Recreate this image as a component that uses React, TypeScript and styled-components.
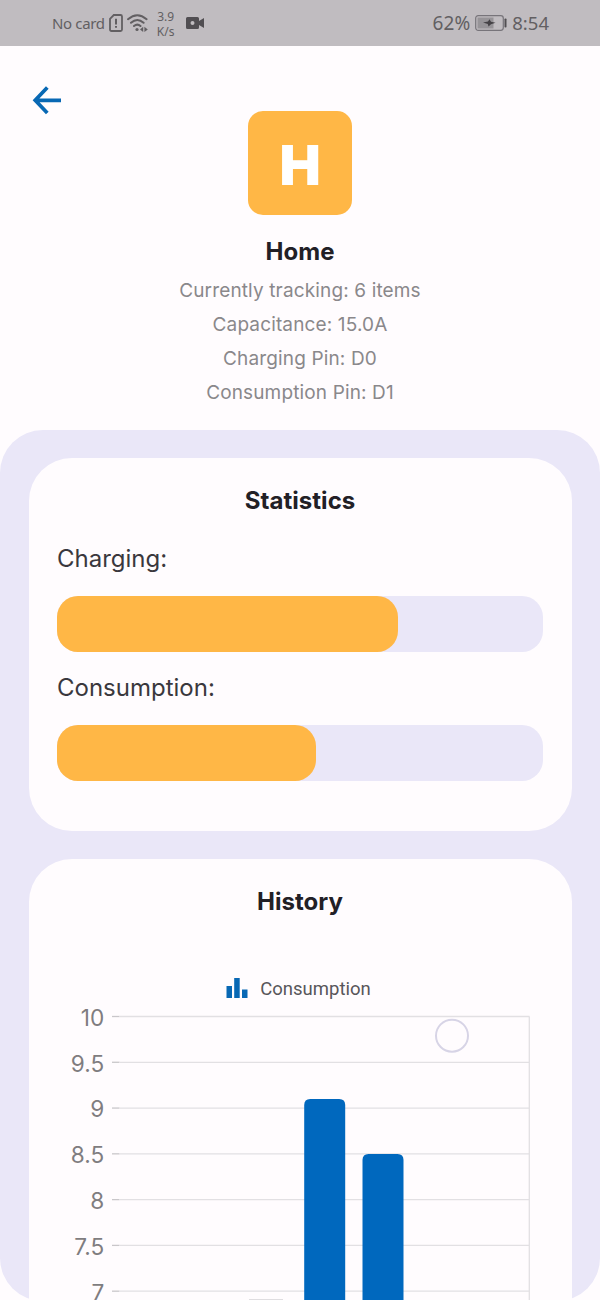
import React from "react";
import styled, { createGlobalStyle } from "styled-components";

const GlobalStyle = createGlobalStyle`
  * { box-sizing: border-box; }
  body { margin: 0; background: #fffcfe; font-family: Inter, "Liberation Sans", sans-serif; }
`;

const Screen = styled.div`
  width: 600px;
  height: 1300px;
  overflow: hidden;
  background: #fffcfe;
  display: flex;
  flex-direction: column;
`;

const StatusBar = styled.header`
  flex: none;
  height: 46px;
  padding: 0 51px 0 52px;
  background: #c0bcc0;
  color: #625f62;
  display: flex;
  justify-content: space-between;
  align-items: center;
  font-family: "Noto Sans", sans-serif;
`;

const StatusGroup = styled.div<{ $gap: number }>`
  display: flex;
  align-items: center;
  gap: ${(p) => p.$gap}px;
  height: 46px;
`;

const StatusText = styled.span<{ $size: number; $spacing?: number }>`
  font-size: ${(p) => p.$size}px;
  letter-spacing: ${(p) => p.$spacing ?? 0}px;
  line-height: 24px;
  white-space: nowrap;
`;

const Speed = styled.div`
  width: 22px;
  margin: 1px 5px 0 3px;
  text-align: center;
  font-size: 12px;
  line-height: 15px;
  white-space: nowrap;
`;

const SpeedLine = styled.div`
  height: 15px;
`;

const Profile = styled.section`
  flex: none;
  height: 384px;
  padding: 38px 31px 0;
  display: flex;
  flex-direction: column;
  align-items: center;
`;

const BackButton = styled.button`
  align-self: flex-start;
  width: 32px;
  height: 32px;
  margin-bottom: -5.5px;
  padding: 0;
  border: 0;
  background: none;
`;

const Avatar = styled.div`
  width: 104px;
  height: 104px;
  border-radius: 15px;
  background: #ffb746;
  color: #fff;
  font-size: 55px;
  font-weight: 900;
  line-height: 108px;
  text-align: center;
`;

const Title = styled.h2<{ $top: number }>`
  margin: ${(p) => p.$top}px 0 0;
  color: #222026;
  font-size: 24px;
  font-weight: 700;
  letter-spacing: 0.05px;
  line-height: 30px;
  text-align: center;
`;

const Info = styled.p`
  margin: 0;
  color: #8a888b;
  font-size: 19px;
  letter-spacing: 0.14px;
  line-height: 34px;
`;

const InfoList = styled.div`
  margin-top: 7px;
  text-align: center;
`;

const Panel = styled.main`
  flex: none;
  height: 871px;
  padding: 28px 28.5px 0;
  border-radius: 43px;
  background: #eae7f8;
  display: flex;
  flex-direction: column;
  gap: 28px;
`;

const Card = styled.section<{ $height: number }>`
  flex: none;
  height: ${(p) => p.$height}px;
  padding: 28px 28.5px 0;
  border-radius: 43px;
  background: #fffcfe;
`;

const Label = styled.div<{ $top: number }>`
  margin-top: ${(p) => p.$top}px;
  color: #3a383d;
  font-size: 24px;
  line-height: 30px;
`;

const Track = styled.div`
  height: 56px;
  margin-top: 22px;
  border-radius: 21px;
  background: #eae7f8;
`;

const Fill = styled.div`
  height: 56px;
  border-radius: 21px;
  background: #ffb746;
`;

const Legend = styled.div`
  height: 28px;
  margin-top: 57px;
  padding-right: 3px;
  display: flex;
  justify-content: center;
  align-items: center;
  gap: 12px;
  color: #58565a;
  font-family: Roboto, sans-serif;
  font-size: 18.5px;
`;

const LegendText = styled.span`
  padding-top: 1px;
`;

const ChartSvg = styled.svg`
  display: block;
  overflow: visible;
`;

const AxisLabel = styled.text`
  fill: #7f7d80;
  font-size: 22.6px;
  text-anchor: end;
`;

const ticks = ["10", "9.5", "9", "8.5", "8", "7.5", "7"];
const stepY = 45.78;
const firstY = 14.5;

const bars = [
  { x: 247.2, y: 97 },
  { x: 305.5, y: 152 },
];

function HistoryChart() {
  return (
    <ChartSvg width="486" height="320" viewBox="0 0 486 320">
      {ticks.map((t, i) => {
        const y = firstY + i * stepY;
        return (
          <g key={t}>
            <AxisLabel x="47.2" y={y + 9.4}>{t}</AxisLabel>
            <line x1="55" x2="62.5" y1={y} y2={y} stroke="#c9c7ca" strokeWidth="1.3" />
            <line x1="62.5" x2="472.5" y1={y} y2={y} stroke="#e2e0e3" strokeWidth="1.3" />
          </g>
        );
      })}
      <line x1="472.3" x2="472.3" y1={firstY} y2="320" stroke="#e2e0e3" strokeWidth="1.3" />
      <rect x="192" y="297" width="34" height="2" fill="#dfdde0" />
      {bars.map((b) => (
        <path
          key={b.x}
          d={`M${b.x} 320V${b.y + 6}q0-6 6-6h29q6 0 6 6V320z`}
          fill="#0068be"
        />
      ))}
      <circle cx="395" cy="33.7" r="16" fill="none" stroke="#d7d4e6" strokeWidth="2" />
    </ChartSvg>
  );
}

function SimIcon() {
  return (
    <svg width="14" height="18" viewBox="0 0 14 18" fill="none" stroke="currentColor" strokeWidth="1.8">
      <path d="M4.8 1H11.5Q13 1 13 2.5V15.5Q13 17 11.5 17H2.5Q1 17 1 15.5V4.8Z" />
      <path d="M7 4.7V10.5M7 12V13.8" strokeWidth="2" />
    </svg>
  );
}

function WifiIcon() {
  return (
    <svg width="21" height="18" viewBox="0 0 21 18" fill="none" stroke="currentColor" strokeWidth="2" strokeLinecap="round">
      <path d="M1 5.2Q10.3 -2.8 19.6 5.2M4 8.8Q10.3 3.2 16.6 8.8M7 12Q10.3 9.2 13.5 12" />
      <circle cx="10" cy="15.5" r="1.6" fill="currentColor" stroke="none" />
      <path d="M13 15.5L16.2 12.8V18ZM20.8 15.5L17.4 12.8V18Z" fill="currentColor" stroke="none" />
    </svg>
  );
}

function CameraIcon() {
  return (
    <svg width="18" height="12" viewBox="0 0 18 12" fill="#514e52">
      <path fillRule="evenodd" d="M1.5 0H11.5Q13 0 13 1.5V4L18 1V11L13 8V10.5Q13 12 11.5 12H1.5Q0 12 0 10.5V1.500Q0 0 1.500 0ZM6.500 4A2 2 0 1 0 6.500 8A2 2 0 1 0 6.500 4Z" />
    </svg>
  );
}

function BatteryIcon() {
  return (
    <svg width="32" height="16" viewBox="0 0 32 16">
      <rect x="0.7" y="0.7" width="27.6" height="14.6" rx="2.5" fill="none" stroke="#77747a" strokeWidth="1.2" />
      <rect x="2.5" y="2.5" width="16" height="11" fill="#979498" />
      <path d="M8 7.5L13 6.5L14.5 4.3L16 6.8L20.5 7.8L16 9.3L13.5 11.5L12.8 9Z" fill="#454246" />
      <rect x="29.5" y="3.5" width="2" height="9" rx="0.8" fill="#514e52" />
    </svg>
  );
}

export default function App() {
  return (
    <>
      <GlobalStyle />
      <Screen>
        <StatusBar>
          <StatusGroup $gap={4}>
            <StatusText $size={15} $spacing={-0.35}>No card</StatusText>
            <SimIcon />
            <WifiIcon />
            <Speed>
              <SpeedLine>3.9</SpeedLine>
              <SpeedLine>K/s</SpeedLine>
            </Speed>
            <CameraIcon />
          </StatusGroup>
          <StatusGroup $gap={5}>
            <StatusText $size={19} $spacing={0.1}>62%</StatusText>
            <BatteryIcon />
            <StatusText $size={18.5}>8:54</StatusText>
          </StatusGroup>
        </StatusBar>
        <Profile>
          <BackButton aria-label="Back">
            <svg width="32" height="32" viewBox="0 0 32 32" fill="none" stroke="#0868b4" strokeWidth="3.7">
              <path d="M30 16.3H4.500M16.300 3.500L4.200 16.300L16.300 29" />
            </svg>
          </BackButton>
          <Avatar>H</Avatar>
          <Title $top={22.5}>Home</Title>
          <InfoList>
            <Info>Currently tracking: 6 items</Info>
            <Info>Capacitance: 15.0A</Info>
            <Info>Charging Pin: D0</Info>
            <Info>Consumption Pin: D1</Info>
          </InfoList>
        </Profile>
        <Panel>
          <Card $height={373}>
            <Title as="h3" $top={0}>Statistics</Title>
            <Label $top={28}>Charging:</Label>
            <Track>
              <Fill style={{ width: "70.2%" }} />
            </Track>
            <Label $top={21}>Consumption:</Label>
            <Track>
              <Fill style={{ width: "53.3%" }} />
            </Track>
          </Card>
          <Card $height={640}>
            <Title as="h3" $top={0}>History</Title>
            <Legend>
              <svg width="22" height="20" viewBox="0 0 22 20" fill="#0868b4">
                <path d="M0.5 8H6V20H0.5ZM8.2 0H13.7V20H8.2ZM16 11.5H21.5V20H16Z" />
              </svg>
              <LegendText>Consumption</LegendText>
            </Legend>
            <HistoryChart />
          </Card>
        </Panel>
      </Screen>
    </>
  );
}
